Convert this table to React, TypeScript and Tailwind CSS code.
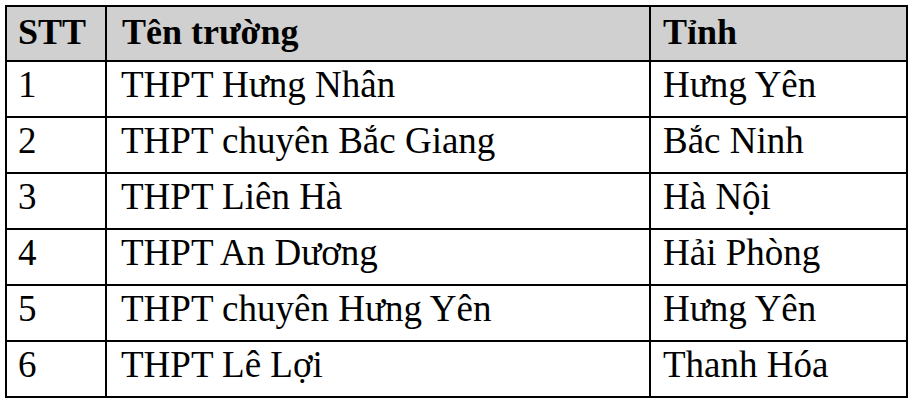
const rows = [
  { stt: '1', name: 'THPT Hưng Nhân', province: 'Hưng Yên' },
  { stt: '2', name: 'THPT chuyên Bắc Giang', province: 'Bắc Ninh' },
  { stt: '3', name: 'THPT Liên Hà', province: 'Hà Nội' },
  { stt: '4', name: 'THPT An Dương', province: 'Hải Phòng' },
  { stt: '5', name: 'THPT chuyên Hưng Yên', province: 'Hưng Yên' },
  { stt: '6', name: 'THPT Lê Lợi', province: 'Thanh Hóa' },
];

const App = () => {
  return (
    <div className="w-[914px] h-[404px] bg-white pl-[5px] pt-[5px] font-['Liberation_Serif'] text-black">
      <div className="w-[903px] border-2 border-black">
        {/* Header */}
        <div className="grid grid-cols-[98px_2px_542px_2px_1fr] h-[53px] bg-[#d0d0d0] text-[36px] leading-[40px] font-bold">
          <div className="pl-[11px] pt-[5px]">STT</div>
          <div className="bg-black" />
          <div className="pl-[15px] pt-[5px]">Tên trường</div>
          <div className="bg-black" />
          <div className="pl-[12px] pt-[5px]">Tỉnh</div>
        </div>

        {/* Rows */}
        {rows.map((r) => (
          <div
            key={r.stt}
            className="grid grid-cols-[98px_2px_542px_2px_1fr] h-[56px] border-t-2 border-black text-[37px] leading-[40px]"
          >
            <div className="pl-[11px] pt-[3px]">{r.stt}</div>
            <div className="bg-black" />
            <div className="pl-[14px] pt-[3px]">{r.name}</div>
            <div className="bg-black" />
            <div className="pl-[12px] pt-[3px]">{r.province}</div>
          </div>
        ))}
      </div>
    </div>
  );
};

export default App;
